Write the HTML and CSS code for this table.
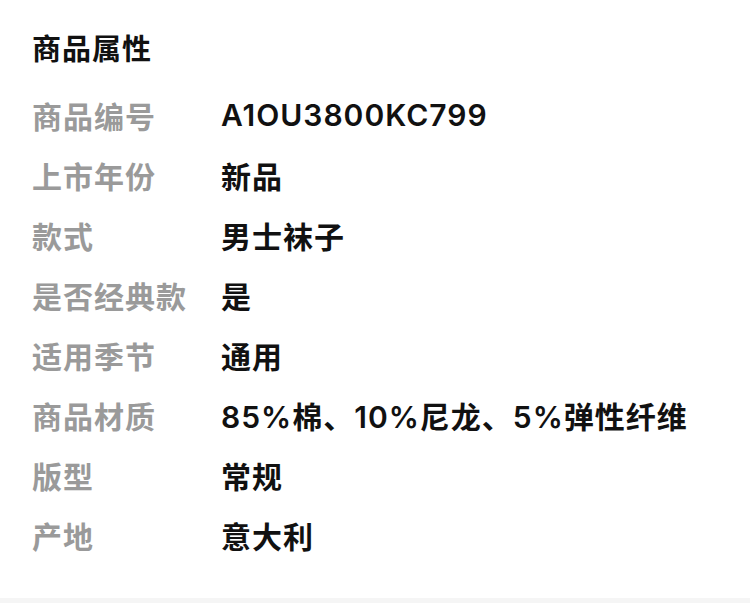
FILE: index.html
```html
<!DOCTYPE html>
<html lang="zh-CN">
<head>
    <meta charset="UTF-8">
    <meta name="viewport" content="width=device-width, initial-scale=1.0">
    <title>商品属性</title>
    <link rel="stylesheet" href="styles.css">
</head>
<body>
    <div class="attr-panel">
        <h2 class="attr-title">商品属性</h2>
        <ul class="attr-list">
            <li class="attr-row"><span class="attr-label">商品编号</span><span class="attr-value">A1OU3800KC799</span></li>
            <li class="attr-row"><span class="attr-label">上市年份</span><span class="attr-value">新品</span></li>
            <li class="attr-row"><span class="attr-label">款式</span><span class="attr-value">男士袜子</span></li>
            <li class="attr-row"><span class="attr-label">是否经典款</span><span class="attr-value">是</span></li>
            <li class="attr-row"><span class="attr-label">适用季节</span><span class="attr-value">通用</span></li>
            <li class="attr-row"><span class="attr-label">商品材质</span><span class="attr-value">85%棉、10%尼龙、5%弹性纤维</span></li>
            <li class="attr-row"><span class="attr-label">版型</span><span class="attr-value">常规</span></li>
            <li class="attr-row"><span class="attr-label">产地</span><span class="attr-value">意大利</span></li>
        </ul>
    </div>
    <div class="divider"></div>
</body>
</html>
```

FILE: styles.css
```css
body {
    margin: 0;
    background-color: #fff;
    font-family: "Inter", "Noto Sans CJK SC", "Noto Sans", sans-serif;
    color: #111;
}
.attr-panel {
    padding: 30px 32px 0 32px;
    height: 568px;
    box-sizing: border-box;
}
.attr-title {
    margin: 0 0 15px 0;
    font-size: 29px;
    line-height: 40px;
    font-weight: 700;
    letter-spacing: 1px;
}
.attr-list {
    list-style: none;
    margin: 0;
    padding: 0;
}
.attr-row {
    display: flex;
    height: 60px;
    align-items: center;
    font-size: 30px;
    font-weight: 600;
}
.attr-label {
    width: 189px;
    flex-shrink: 0;
    color: #9a9a9a;
    letter-spacing: 1px;
}
.attr-value {
    color: #111;
    letter-spacing: 1px;
}
.divider {
    height: 35px;
    background-color: #f5f5f5;
    margin-top: 30px;
}
```
